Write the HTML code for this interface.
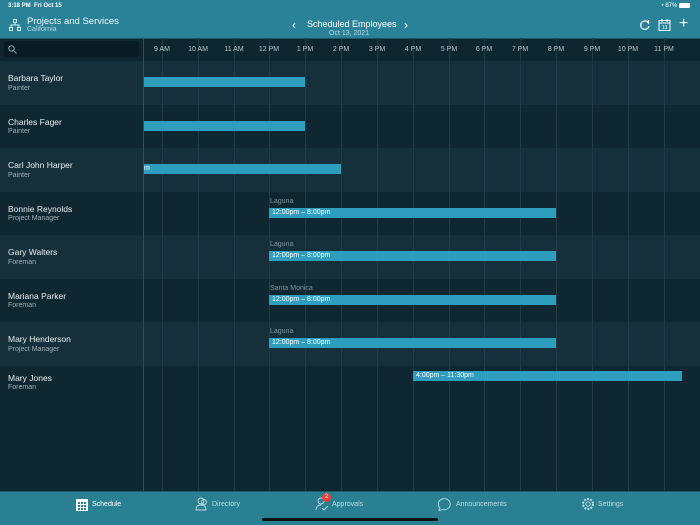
<!DOCTYPE html>
<html><head><style>
*{margin:0;padding:0;box-sizing:border-box}
body{width:700px;height:525px;overflow:hidden;background:#0f2731;font-family:"Liberation Sans",sans-serif;position:relative;color:#fff}
.abs{position:absolute}
#hdr{left:0;top:0;width:700px;height:38px;background:#2a8298}
#th{left:0;top:38px;width:700px;height:23px;background:#0e2630;border-top:1px solid #1f5566}
.row{position:absolute;left:0;width:700px;height:44px}
.l{background:#15303b}.d{background:#0f2731}
.nm{position:absolute;left:8px;font-size:8.5px;color:#e8eef0}
.rl{position:absolute;left:8px;font-size:7px;color:#9fb0b6}
.vl{position:absolute;top:38px;width:1px;height:453px;background:#1d3c47}
.hl{position:absolute;top:46px;font-size:7px;color:#b8c8cd;width:40px;text-align:center}
.bar{position:absolute;height:10px;background:#2f9ebe;font-size:7px;line-height:10px;padding-left:3px;color:#fff;white-space:nowrap;overflow:hidden}
.loc{position:absolute;font-size:7px;color:#7f959c}
#tab{left:0;top:491px;width:700px;height:34px;background:#2a8093;border-top:1px solid #1d5a6a}
.tb{position:absolute;top:501px;font-size:7px;color:#c0dbe2}
</style></head><body>
<div id="hdr" class="abs"></div>
<div class="abs" style="left:8px;top:3px;font-size:6px;font-weight:bold">3:18 PM&nbsp;&nbsp;Fri Oct 15</div>
<div class="abs" style="right:10px;top:3px;font-size:6px">&#8226; 87% <span style="display:inline-block;width:11px;height:5px;background:#fff;border-radius:1px;vertical-align:middle"></span></div>
<svg class="abs" style="left:9px;top:19px" width="12" height="12" viewBox="0 0 12 12" fill="none" stroke="#d8eef3" stroke-width="1"><rect x="4.5" y="0.5" width="3" height="3"/><rect x="0.5" y="8.5" width="3" height="3"/><rect x="8.5" y="8.5" width="3" height="3"/><path d="M6 3.5V6M2 8.5V6h8v2.5"/></svg>
<div class="abs" style="left:27px;top:16px;font-size:9.5px;color:#eef7f9">Projects and Services</div>
<div class="abs" style="left:27px;top:26px;font-size:7px;color:#b7d7df">California</div>
<div class="abs" style="left:292px;top:18px;font-size:12px;color:#fff">&#8249;</div>
<div class="abs" style="left:307px;top:19px;font-size:9px;color:#fff">Scheduled Employees</div>
<div class="abs" style="left:404px;top:18px;font-size:12px;color:#fff">&#8250;</div>
<div class="abs" style="left:329px;top:30px;font-size:7px;color:#b7d7df">Oct 13, 2021</div>
<svg class="abs" style="left:639px;top:19px" width="12" height="12" viewBox="0 0 12 12" fill="none" stroke="#fff" stroke-width="1.2"><path d="M9.5 4A4.2 4.2 0 1 0 10 7"/><path d="M7 1.5l2.5 2.5-0 -3"/></svg>
<svg class="abs" style="left:658px;top:18px" width="13" height="13" viewBox="0 0 13 13" fill="none" stroke="#fff" stroke-width="1"><rect x="1" y="2.5" width="11" height="10"/><path d="M1 5h11M4 1v3M9 1v3"/><text x="6.5" y="11" font-size="5" fill="#fff" stroke="none" text-anchor="middle" font-family="Liberation Sans">13</text></svg>
<div class="abs" style="left:679px;top:15px;font-size:16px;color:#fff;font-weight:300">+</div>

<div id="th" class="abs"></div>
<div class="abs" style="left:4px;top:41px;width:135px;height:16px;background:#091b23;border-radius:3px"></div>
<svg class="abs" style="left:8px;top:45px" width="9" height="9" viewBox="0 0 9 9" fill="none" stroke="#8aa" stroke-width="1"><circle cx="3.5" cy="3.5" r="2.7"/><path d="M5.5 5.5L8.5 8.5"/></svg>

<div class="row l" style="top:61px"></div>
<div class="row d" style="top:105px"></div>
<div class="row l" style="top:148px"></div>
<div class="row d" style="top:192px"></div>
<div class="row l" style="top:235px"></div>
<div class="row d" style="top:279px"></div>
<div class="row l" style="top:322px"></div>

<div class="vl" style="left:162px"></div><div class="vl" style="left:198px"></div><div class="vl" style="left:234px"></div><div class="vl" style="left:269px"></div><div class="vl" style="left:305px"></div><div class="vl" style="left:341px"></div><div class="vl" style="left:377px"></div><div class="vl" style="left:413px"></div><div class="vl" style="left:449px"></div><div class="vl" style="left:484px"></div><div class="vl" style="left:520px"></div><div class="vl" style="left:556px"></div><div class="vl" style="left:592px"></div><div class="vl" style="left:628px"></div><div class="vl" style="left:664px"></div>
<div class="abs" style="left:143px;top:38px;width:1px;height:453px;background:#1f5566"></div>

<div class="hl" style="left:142px">9 AM</div><div class="hl" style="left:178px">10 AM</div><div class="hl" style="left:214px">11 AM</div><div class="hl" style="left:249px">12 PM</div><div class="hl" style="left:285px">1 PM</div><div class="hl" style="left:321px">2 PM</div><div class="hl" style="left:357px">3 PM</div><div class="hl" style="left:393px">4 PM</div><div class="hl" style="left:429px">5 PM</div><div class="hl" style="left:464px">6 PM</div><div class="hl" style="left:500px">7 PM</div><div class="hl" style="left:536px">8 PM</div><div class="hl" style="left:572px">9 PM</div><div class="hl" style="left:608px">10 PM</div><div class="hl" style="left:644px">11 PM</div>

<div class="nm" style="top:73px">Barbara Taylor</div><div class="rl" style="top:85px">Painter</div>
<div class="nm" style="top:117px">Charles Fager</div><div class="rl" style="top:128px">Painter</div>
<div class="nm" style="top:160px">Carl John Harper</div><div class="rl" style="top:172px">Painter</div>
<div class="nm" style="top:204px">Bonnie Reynolds</div><div class="rl" style="top:215px">Project Manager</div>
<div class="nm" style="top:247px">Gary Walters</div><div class="rl" style="top:259px">Foreman</div>
<div class="nm" style="top:291px">Mariana Parker</div><div class="rl" style="top:302px">Foreman</div>
<div class="nm" style="top:334px">Mary Henderson</div><div class="rl" style="top:346px">Project Manager</div>
<div class="nm" style="top:373px">Mary Jones</div><div class="rl" style="top:384px">Foreman</div>

<div class="bar" style="left:144px;top:77px;width:161px"></div>
<div class="bar" style="left:144px;top:121px;width:161px"></div>
<div class="bar" style="left:144px;top:164px;width:197px;padding-left:0">m</div>
<div class="loc" style="left:270px;top:198px">Laguna</div><div class="bar" style="left:269px;top:208px;width:287px">12:00pm – 8:00pm</div>
<div class="loc" style="left:270px;top:241px">Laguna</div><div class="bar" style="left:269px;top:251px;width:287px">12:00pm – 8:00pm</div>
<div class="loc" style="left:270px;top:285px">Santa Monica</div><div class="bar" style="left:269px;top:295px;width:287px">12:00pm – 8:00pm</div>
<div class="loc" style="left:270px;top:328px">Laguna</div><div class="bar" style="left:269px;top:338px;width:287px">12:00pm – 8:00pm</div>
<div class="bar" style="left:413px;top:371px;width:269px">4:00pm – 11:30pm</div>

<div id="tab" class="abs"></div>
<svg class="abs" style="left:76px;top:498px" width="12" height="13" viewBox="0 0 12 13"><rect x="0" y="1" width="12" height="12" fill="#fff"/><g fill="#2a8093"><rect x="2" y="4" width="2" height="2"/><rect x="5" y="4" width="2" height="2"/><rect x="8" y="4" width="2" height="2"/><rect x="2" y="7" width="2" height="2"/><rect x="5" y="7" width="2" height="2"/><rect x="8" y="7" width="2" height="2"/><rect x="2" y="10" width="2" height="2"/><rect x="5" y="10" width="2" height="2"/><rect x="8" y="10" width="2" height="2"/></g></svg>
<div class="tb" style="left:92px;color:#fff">Schedule</div>
<svg class="abs" style="left:195px;top:497px" width="14" height="14" viewBox="0 0 14 14" fill="none" stroke="#c0dbe2" stroke-width="0.9"><circle cx="6" cy="4" r="3"/><path d="M1 13c0-4 2-5 5-5s5 1 5 5z"/><circle cx="9" cy="5" r="2.5"/></svg>
<div class="tb" style="left:212px">Directory</div>
<svg class="abs" style="left:315px;top:497px" width="14" height="14" viewBox="0 0 14 14" fill="none" stroke="#c0dbe2" stroke-width="0.9"><circle cx="6" cy="4" r="3"/><path d="M1 13c0-3 2-5 5-5M7 11l2 2 4-4"/></svg>
<div class="abs" style="left:322px;top:493px;width:9px;height:9px;border-radius:50%;background:#e8403a;font-size:6px;text-align:center;line-height:9px">2</div>
<div class="tb" style="left:332px">Approvals</div>
<svg class="abs" style="left:437px;top:497px" width="15" height="14" viewBox="0 0 15 14" fill="none" stroke="#c0dbe2" stroke-width="0.9"><path d="M3 11A6 5.5 0 1 1 6 12.5L2 13.5z"/></svg>
<div class="tb" style="left:456px">Announcements</div>
<svg class="abs" style="left:581px;top:497px" width="14" height="14" viewBox="0 0 14 14" fill="none" stroke="#c0dbe2" stroke-width="0.9"><circle cx="7" cy="7" r="2.2"/><circle cx="7" cy="7" r="5" stroke-dasharray="2 1.2" stroke-width="2"/></svg>
<div class="tb" style="left:598px">Settings</div>
<div class="abs" style="left:262px;top:518px;width:176px;height:3px;border-radius:2px;background:#111"></div>
</body></html>
